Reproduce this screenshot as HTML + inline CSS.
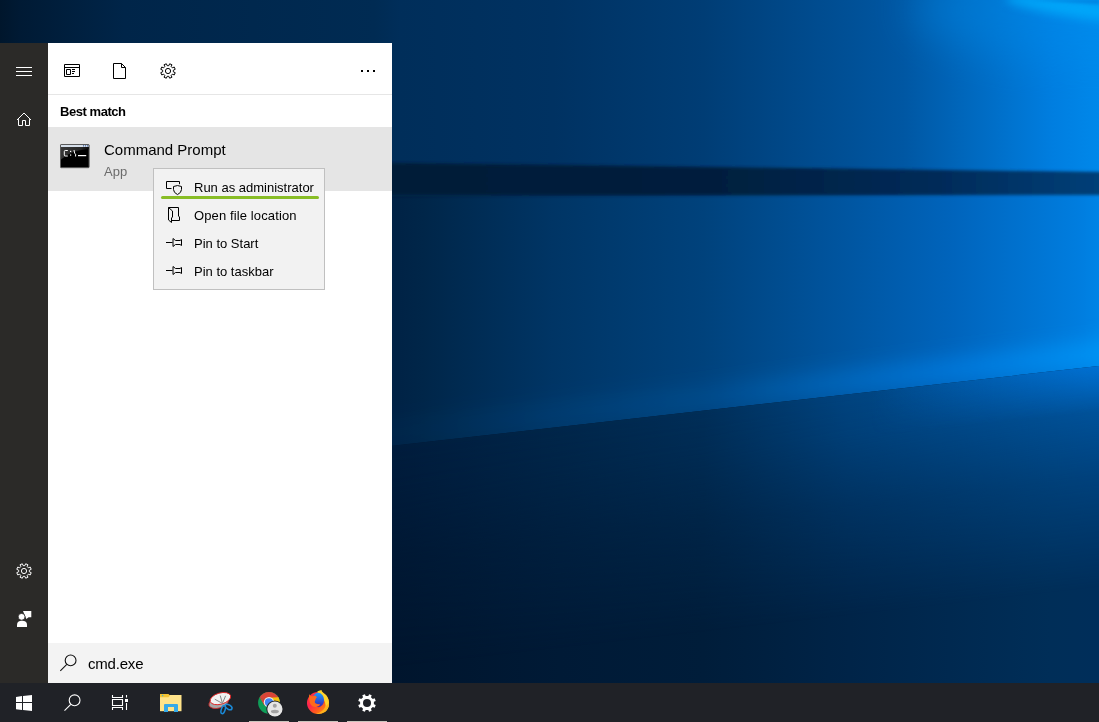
<!DOCTYPE html>
<html><head><meta charset="utf-8">
<style>
*{margin:0;padding:0;box-sizing:border-box}
html,body{width:1099px;height:722px;overflow:hidden;background:#001a3a;font-family:"Liberation Sans",sans-serif;-webkit-font-smoothing:antialiased}
#best,#t1,#t2,.mi,#stxt{will-change:transform}
.abs{position:absolute}
#wall{position:absolute;left:0;top:0;width:1099px;height:683px}
#rail{position:absolute;left:0;top:43px;width:48px;height:640px;background:#2b2a28}
#panel{position:absolute;left:48px;top:43px;width:344px;height:600px;background:#fff}
#sep{position:absolute;left:48px;top:94px;width:344px;height:1px;background:#e6e6e6}
#best{position:absolute;left:60px;top:104px;font-size:13px;font-weight:bold;color:#000;letter-spacing:-0.45px}
#sel{position:absolute;left:48px;top:127px;width:344px;height:64px;background:#e5e5e5}
#t1{position:absolute;left:104px;top:141px;font-size:15px;color:#000}
#t2{position:absolute;left:104px;top:164px;font-size:13px;color:#6b6b6b}
#ctx{position:absolute;left:153px;top:168px;width:172px;height:122px;background:#f2f2f2;border:1px solid #c0c0c0}
.mi{position:absolute;left:194px;font-size:13px;color:#000}
#green{position:absolute;left:161px;top:196px;width:158px;height:3px;background:#88bd26;border-radius:1.5px}
#search{position:absolute;left:48px;top:643px;width:344px;height:40px;background:#f3f3f3}
#stxt{position:absolute;left:88px;top:655px;font-size:15px;color:#000;letter-spacing:-0.2px}
#task{position:absolute;left:0;top:683px;width:1099px;height:39px;background:#202227}
.ul{position:absolute;top:721px;width:40px;height:1px;background:#c9c4bc}
svg{position:absolute;overflow:visible}
</style></head><body>
<svg id="wall" width="1099" height="683" viewBox="0 0 1099 683">
  <defs>
    <linearGradient id="gTop" gradientUnits="userSpaceOnUse" x1="0" y1="0" x2="1099" y2="0">
      <stop offset="0" stop-color="#00162c"/>
      <stop offset="0.018" stop-color="#001a34"/>
      <stop offset="0.113" stop-color="#002549"/>
      <stop offset="0.23" stop-color="#00284e"/>
      <stop offset="0.34" stop-color="#002b53"/>
      <stop offset="0.364" stop-color="#002e5a"/>
      <stop offset="0.503" stop-color="#003262"/>
      <stop offset="0.64" stop-color="#003d75"/>
      <stop offset="0.822" stop-color="#0057a3"/>
      <stop offset="0.958" stop-color="#007ee0"/>
      <stop offset="1" stop-color="#0088ea"/>
    </linearGradient>
    <linearGradient id="gMid" gradientUnits="userSpaceOnUse" x1="0" y1="0" x2="1099" y2="0">
      <stop offset="0.357" stop-color="#002245"/>
      <stop offset="0.385" stop-color="#002649"/>
      <stop offset="0.503" stop-color="#003565"/>
      <stop offset="0.64" stop-color="#00427c"/>
      <stop offset="0.867" stop-color="#0064bc"/>
      <stop offset="0.985" stop-color="#007ee0"/>
      <stop offset="1" stop-color="#0084e6"/>
    </linearGradient>
    <linearGradient id="gLow" gradientUnits="userSpaceOnUse" x1="0" y1="0" x2="1099" y2="0">
      <stop offset="0.357" stop-color="#00152d"/>
      <stop offset="0.51" stop-color="#001a36"/>
      <stop offset="0.64" stop-color="#001d3a"/>
      <stop offset="0.773" stop-color="#002448"/>
      <stop offset="0.955" stop-color="#002e58"/>
      <stop offset="1" stop-color="#002e5a"/>
    </linearGradient>
    <linearGradient id="gLowNear" gradientUnits="userSpaceOnUse" x1="0" y1="0" x2="1099" y2="0">
      <stop offset="0.357" stop-color="#001c3c"/>
      <stop offset="0.51" stop-color="#00264a"/>
      <stop offset="0.64" stop-color="#002e58"/>
      <stop offset="0.773" stop-color="#004480"/>
      <stop offset="1" stop-color="#005aa8"/>
    </linearGradient>
    <linearGradient id="gNorm" gradientUnits="userSpaceOnUse" x1="700" y1="411.2" x2="724.7" y2="629.8">
      <stop offset="0" stop-color="#fff" stop-opacity="1"/>
      <stop offset="0.18" stop-color="#fff" stop-opacity="0.85"/>
      <stop offset="0.5" stop-color="#fff" stop-opacity="0.45"/>
      <stop offset="1" stop-color="#fff" stop-opacity="0"/>
    </linearGradient>
    <linearGradient id="gNorm2" gradientUnits="userSpaceOnUse" x1="700" y1="411.2" x2="705" y2="455.9">
      <stop offset="0" stop-color="#fff" stop-opacity="1"/>
      <stop offset="1" stop-color="#fff" stop-opacity="0"/>
    </linearGradient>
    <linearGradient id="gGlowBelow" gradientUnits="userSpaceOnUse" x1="870" y1="0" x2="1099" y2="0">
      <stop offset="0" stop-color="#0078e0" stop-opacity="0"/>
      <stop offset="0.5" stop-color="#0078e0" stop-opacity="0.35"/>
      <stop offset="1" stop-color="#0078e0" stop-opacity="0.75"/>
    </linearGradient>
    <mask id="mLow2" maskUnits="userSpaceOnUse" x="0" y="0" width="1099" height="683">
      <rect x="0" y="0" width="1099" height="683" fill="url(#gNorm2)"/>
    </mask>
    <mask id="mLow" maskUnits="userSpaceOnUse" x="0" y="0" width="1099" height="683">
      <rect x="0" y="0" width="1099" height="683" fill="url(#gNorm)"/>
    </mask>
    <linearGradient id="gBand" gradientUnits="userSpaceOnUse" x1="0" y1="0" x2="1099" y2="0">
      <stop offset="0.357" stop-color="#001a38"/>
      <stop offset="0.64" stop-color="#001e3c"/>
      <stop offset="0.85" stop-color="#002a58"/>
      <stop offset="1" stop-color="#003f78"/>
    </linearGradient>
    
    <linearGradient id="gGlowX" gradientUnits="userSpaceOnUse" x1="400" y1="0" x2="1099" y2="0">
      <stop offset="0" stop-color="#0090ff" stop-opacity="0.03"/>
      <stop offset="0.45" stop-color="#0090ff" stop-opacity="0.12"/>
      <stop offset="0.8" stop-color="#0090ff" stop-opacity="0.45"/>
      <stop offset="1" stop-color="#00a0ff" stop-opacity="0.6"/>
    </linearGradient>
    <radialGradient id="gTR" gradientUnits="userSpaceOnUse" cx="1099" cy="0" r="100">
      <stop offset="0" stop-color="#10b0ff" stop-opacity="0.8"/>
      <stop offset="1" stop-color="#10b0ff" stop-opacity="0"/>
    </radialGradient>
    <filter id="blur2" x="-5%" y="-50%" width="110%" height="200%"><feGaussianBlur stdDeviation="1.5"/></filter>
    <filter id="blur20" x="-50%" y="-100%" width="200%" height="300%"><feGaussianBlur stdDeviation="20"/></filter>
    <filter id="blur5" x="-50%" y="-200%" width="200%" height="500%"><feGaussianBlur stdDeviation="5"/></filter>
    <filter id="blur8" x="-20%" y="-200%" width="140%" height="500%"><feGaussianBlur stdDeviation="10"/></filter>
  </defs>
  <rect x="0" y="0" width="1099" height="683" fill="url(#gTop)"/>
  <ellipse cx="1099" cy="10" rx="190" ry="55" fill="#0090f0" opacity="0.35" filter="url(#blur20)"/>
  <ellipse cx="1080" cy="9" rx="75" ry="9" transform="rotate(8 1080 9)" fill="#00b0ff" opacity="0.75" filter="url(#blur5)"/>
  <polygon points="1030,0 1099,0 1099,4" fill="#0078d8" opacity="0.6" filter="url(#blur2)"/>
  <polygon points="0,196 1099,195 1099,366 0,490" fill="url(#gMid)"/>
  <polygon points="300,431 1120,339 1120,363 300,455" fill="url(#gGlowX)" filter="url(#blur8)"/>
  <polygon points="0,490 1099,366 1099,683 0,683" fill="url(#gLow)"/>
  <polygon points="0,490 1099,366 1099,683 0,683" fill="url(#gLowNear)" mask="url(#mLow)"/>
  <polygon points="0,490 1099,366 1099,683 0,683" fill="url(#gGlowBelow)" mask="url(#mLow2)"/>
  <polygon points="-20,157.7 1130,172.3 1130,195 -20,196" fill="url(#gBand)" filter="url(#blur2)"/>
</svg>

<div id="rail"></div>
<div id="panel"></div>
<div id="sep"></div>
<div id="best">Best match</div>
<div id="sel"></div>
<div id="t1">Command Prompt</div>
<div id="t2">App</div>
<div id="ctx"></div>
<div class="mi" style="top:180px">Run as administrator</div>
<div class="mi" style="top:208px;letter-spacing:0.12px">Open file location</div>
<div class="mi" style="top:236px">Pin to Start</div>
<div class="mi" style="top:264px">Pin to taskbar</div>
<div id="green"></div>
<div id="search"></div>
<div id="stxt">cmd.exe</div>
<div id="task"></div>
<div class="ul" style="left:249px"></div>
<div class="ul" style="left:298px"></div>
<div class="ul" style="left:347px"></div>

<svg width="1099" height="722" style="left:0;top:0" viewBox="0 0 1099 722">
  <!-- rail icons -->
  <g fill="none" stroke="#fff" stroke-width="1">
    <path d="M16,67.5H32M16,71.5H32M16,75.5H32"/>
    <path d="M17,120 L24,113 L31,120 M18.5,119.2 V125.5 H22.5 V120.5 H25.5 V125.5 H29.5 V119.2" stroke-linejoin="miter"/>
    <path d="M24.80,565.66 L25.67,563.79 L27.92,564.72 L27.21,566.66 L28.34,567.79 L30.28,567.08 L31.21,569.33 L29.34,570.20 L29.34,571.80 L31.21,572.67 L30.28,574.92 L28.34,574.21 L27.21,575.34 L27.92,577.28 L25.67,578.21 L24.80,576.34 L23.20,576.34 L22.33,578.21 L20.08,577.28 L20.79,575.34 L19.66,574.21 L17.72,574.92 L16.79,572.67 L18.66,571.80 L18.66,570.20 L16.79,569.33 L17.72,567.08 L19.66,567.79 L20.79,566.66 L20.08,564.72 L22.33,563.79 L23.20,565.66 Z"/>
    <circle cx="24" cy="571" r="2.6"/>
  </g>
  <g fill="#fff">
    <path d="M23,611 H31.3 V617.2 H28.6 L26.4,619 L25.6,617.2 Z"/>
    <circle cx="21.6" cy="616.8" r="3.4" stroke="#2b2a28" stroke-width="0.8"/>
    <path d="M17,627 V625 Q17,620.8 22,620.8 Q27,620.8 27,625 V627 Z"/>
  </g>
  <!-- toolbar icons -->
  <g fill="none" stroke="#000" stroke-width="1">
    <path d="M64.5,64.5 H79.5 V76.5 H64.5 Z M64.5,67.5 H79.5 M66.5,69.5 H70.5 V74.5 H66.5 Z M72,69.5 H75 M72,71.5 H75 M72,73.5 H74"/>
    <path d="M113.5,63.5 H121.5 L125.5,67.5 V78.5 H113.5 Z M121.5,63.5 V67.5 H125.5"/>
    <path d="M168.80,65.66 L169.67,63.79 L171.92,64.72 L171.21,66.66 L172.34,67.79 L174.28,67.08 L175.21,69.33 L173.34,70.20 L173.34,71.80 L175.21,72.67 L174.28,74.92 L172.34,74.21 L171.21,75.34 L171.92,77.28 L169.67,78.21 L168.80,76.34 L167.20,76.34 L166.33,78.21 L164.08,77.28 L164.79,75.34 L163.66,74.21 L161.72,74.92 L160.79,72.67 L162.66,71.80 L162.66,70.20 L160.79,69.33 L161.72,67.08 L163.66,67.79 L164.79,66.66 L164.08,64.72 L166.33,63.79 L167.20,65.66 Z"/>
    <circle cx="168" cy="71" r="2.6"/>
  </g>
  <g fill="#000">
    <rect x="361" y="70" width="2" height="2"/>
    <rect x="367" y="70" width="2" height="2"/>
    <rect x="373" y="70" width="2" height="2"/>
  </g>
  <!-- cmd icon -->
  <defs>
    <linearGradient id="gloss" x1="0" y1="0" x2="1" y2="0.3">
      <stop offset="0" stop-color="#3a3a3a"/>
      <stop offset="0.7" stop-color="#262626"/>
      <stop offset="1" stop-color="#000"/>
    </linearGradient>
  </defs>
  <rect x="60.5" y="144.5" width="28.6" height="23.2" rx="0.8" fill="#000" stroke="#5a5a5a" stroke-width="1"/>
  <rect x="61" y="145" width="27.6" height="2" fill="#d6dfea"/>
  <rect x="83" y="145.2" width="1.1" height="1.3" fill="#4a6aa0"/>
  <rect x="85" y="145.2" width="1.1" height="1.3" fill="#4a6aa0"/>
  <rect x="87" y="145.2" width="1.1" height="1.3" fill="#4a6aa0"/>
  <path d="M61,147 H88.6 V149 Q70,150.5 61,159.5 Z" fill="url(#gloss)"/>
  <g fill="none" stroke="#fff" stroke-width="1">
    <path d="M67.8,150.5 H65.2 Q64.3,150.5 64.3,151.6 V154.9 Q64.3,156 65.2,156 H67.8"/>
    <path d="M74,150 L74.6,153.2 L75.6,154.2 V156.5"/>
  </g>
  <rect x="70" y="150.8" width="1.2" height="1.2" fill="#fff"/>
  <rect x="70" y="154.5" width="1.2" height="1.2" fill="#fff"/>
  <rect x="78" y="155" width="8.2" height="1.2" fill="#fff"/>
  <!-- context icons -->
  <g fill="none" stroke="#000" stroke-width="1">
    <path d="M171.5,188.5 H166.5 V181.5 H179.5 V184.2"/>
    <path d="M173.5,186.5 Q177.5,184.6 181.5,186.5 V189.5 Q181.5,192.6 177.5,194.6 Q173.5,192.6 173.5,189.5 Z"/>
    <path d="M168.5,207.5 H178.5 V216 L179.5,217 V220.5 H171.5"/>
    <path d="M168.5,207.5 L172.5,211 V217 L171.5,218 V222.5 L168.5,220 Z"/>
    <path d="M166,242.5 H172.5 M173,238.5 V246.5 M173,238.5 L175.5,240.5 H180 L181.5,239.5 V245.5 L180,244.5 H175.5 L173,246.5"/>
    <path d="M166,270.5 H172.5 M173,266.5 V274.5 M173,266.5 L175.5,268.5 H180 L181.5,267.5 V273.5 L180,272.5 H175.5 L173,274.5"/>
  </g>
  <!-- search icon -->
  <g fill="none" stroke="#111" stroke-width="1.1">
    <circle cx="70.6" cy="660.4" r="5.4"/>
    <path d="M66.8,664.4 L60.3,670.8"/>
  </g>
  <!-- taskbar -->
  <g fill="#fff">
    <path d="M16,697 L22,696.1 V702 H16 Z M23,696 L32,694.9 V702 H23 Z M16,703 H22 V710 L16,709.2 Z M23,703 H32 V711.1 L23,710.1 Z"/>
  </g>
  <g fill="none" stroke="#fff" stroke-width="1.1">
    <circle cx="74.6" cy="700.3" r="5.4"/>
    <path d="M70.8,704.3 L64.5,710.6"/>
    <path d="M112.5,695 V697.5 H122.5 V695 M112.5,699.5 H122.5 V705.5 H112.5 Z M112.5,710 V707.5 H122.5 V710 M126.5,695 V697.5 M126.5,703 V710"/>
  </g>
  <rect x="125" y="699" width="3" height="3" fill="#fff"/>
  <!-- explorer -->
  <rect x="160" y="695" width="21.5" height="16.2" fill="#ffe38a"/>
  <path d="M160,694 H168.5 L170,695.5 L168.5,697.2 H160 Z" fill="#f3c232"/>
  <circle cx="162.6" cy="695.6" r="0.8" fill="#4ab8d0"/>
  <path d="M164,712 V705 Q164,704 165,704 H177 Q178,704 178,705 V712 H174 V707 H168 V712 Z" fill="#36a9e8"/>
  <!-- snipping -->
  <ellipse cx="218.6" cy="702.6" rx="10" ry="5.4" transform="rotate(-16 218.6 702.6)" fill="#a8a8a8" stroke="#d42a2a" stroke-width="0.8"/>
  <ellipse cx="220.4" cy="698.6" rx="10.6" ry="5.6" transform="rotate(-16 220.4 698.6)" fill="#f2f2f2" stroke="#e02424" stroke-width="0.9"/>
  <path d="M220.2,695.5 L222.5,703.5 M214.8,699.2 L222,703.2 M225.6,695.8 L222.8,702.5" stroke="#7a7a7a" stroke-width="0.9" fill="none"/>
  <g fill="none" stroke="#1a8ad8" stroke-width="1.5">
    <ellipse cx="223.2" cy="709.6" rx="1.9" ry="4.2" transform="rotate(18 223.2 709.6)"/>
    <ellipse cx="228.6" cy="707" rx="3.8" ry="2.1" transform="rotate(32 228.6 707)"/>
  </g>
  <!-- chrome -->
  <circle cx="269" cy="702.8" r="10.9" fill="#0f9d58"/>
  <path d="M269,702.8 L259.6,697.35 A10.9,10.9 0 0 1 278.4,697.35 Z" fill="#db4437"/>
  <path d="M269,702.8 L278.4,697.35 A10.9,10.9 0 0 1 269,713.7 Z" fill="#f4c20d"/>
  <path d="M269,702.8 L259.6,697.35 L264.3,705.5 Z" fill="#db4437"/>
  <path d="M269,697.8 L278.4,697.35 L278.4,702.8 Z" fill="#f4c20d"/>
  <circle cx="269" cy="702.3" r="5.2" fill="#f1f1f1"/>
  <circle cx="269" cy="702.3" r="4.1" fill="#4285f4"/>
  <circle cx="274.9" cy="709" r="8.6" fill="#202227"/>
  <circle cx="274.9" cy="709" r="7.6" fill="#e6e6e6"/>
  <circle cx="274.8" cy="705.8" r="2" fill="#a2a2a2"/>
  <ellipse cx="274.9" cy="711.5" rx="4" ry="1.8" fill="#a2a2a2"/>
  <!-- firefox -->
  <defs>
    <linearGradient id="ffo" x1="0" y1="0.1" x2="0.9" y2="1">
      <stop offset="0" stop-color="#ff3a38"/>
      <stop offset="0.35" stop-color="#ff2450"/>
      <stop offset="0.65" stop-color="#ff5a1e"/>
      <stop offset="1" stop-color="#ffa010"/>
    </linearGradient>
    <linearGradient id="ffb" x1="0" y1="0" x2="0" y2="1">
      <stop offset="0" stop-color="#1a9cff"/>
      <stop offset="1" stop-color="#3a20b0"/>
    </linearGradient>
  </defs>
  <circle cx="318" cy="703" r="11" fill="url(#ffo)"/>
  <path d="M317.5,691.2 Q320,690.4 321.5,690 Q321.6,691.8 323.3,692.8 Q329,696.5 329,703 Q329,709 325,712 Q327,705 323.5,699 Q321,694.5 317.5,692.5 Z" fill="#ffd42a"/>
  <path d="M329,703 Q329,709 325,712 Q321,714.5 316,714 Q323,712 325.5,706.5 Z" fill="#ffb21a"/>
  <ellipse cx="318.2" cy="700" rx="5.9" ry="7.2" fill="url(#ffb)"/>
  <path d="M309.2,694 L310.2,695.8 Q312.5,696.8 315.2,695.6 L317,697.2 Q315.8,698.2 315.5,699.5 Q314.3,701.5 315,703 Q317.5,704.6 320.2,704.2 Q319.5,706.2 317,706.8 Q313,707.6 311,705 Q308.3,701 309.2,694 Z" fill="#ff6a1c"/>
  <!-- settings -->
  <path d="M368.31,696.12 L369.10,694.25 L371.70,695.33 L370.93,697.21 L372.79,699.07 L374.67,698.30 L375.75,700.90 L373.88,701.69 L373.88,704.31 L375.75,705.10 L374.67,707.70 L372.79,706.93 L370.93,708.79 L371.70,710.67 L369.10,711.75 L368.31,709.88 L365.69,709.88 L364.90,711.75 L362.30,710.67 L363.07,708.79 L361.21,706.93 L359.33,707.70 L358.25,705.10 L360.12,704.31 L360.12,701.69 L358.25,700.90 L359.33,698.30 L361.21,699.07 L363.07,697.21 L362.30,695.33 L364.90,694.25 L365.69,696.12 Z" fill="#fff"/>
  <circle cx="367" cy="703" r="4" fill="#202227"/>
</svg>
</body></html>
